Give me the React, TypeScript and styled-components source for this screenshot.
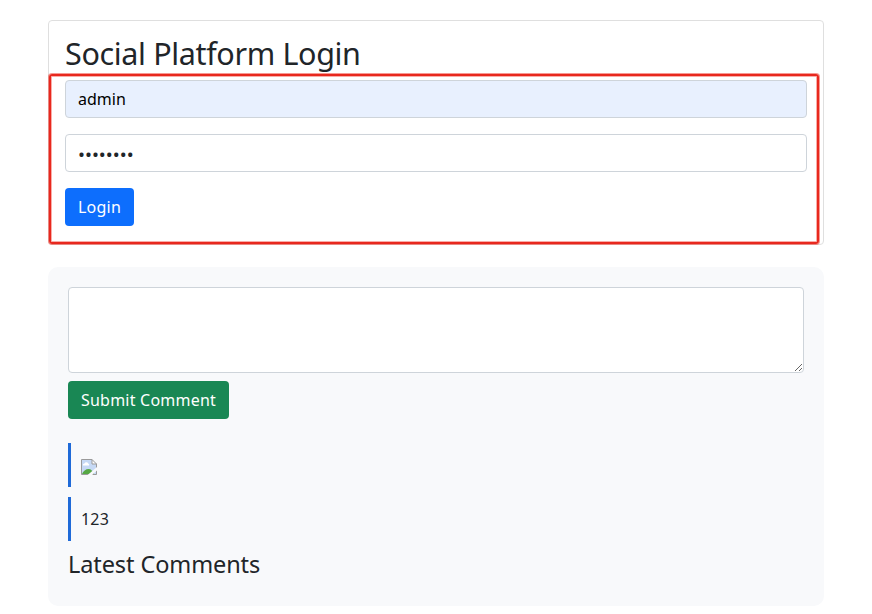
import React from 'react';
import styled, { createGlobalStyle } from 'styled-components';

const GlobalStyle = createGlobalStyle`
  *, *::before, *::after { box-sizing: border-box; }
  body {
    margin: 0;
    background: #fff;
    color: #212529;
    font: 400 16px/24px "Segoe UI", "Noto Sans", sans-serif;
  }
`;

const Page = styled.main`
  width: 776px;
  margin-left: 48px;
  padding-top: 20px;
`;

const Card = styled.section`
  position: relative;
  height: 225px;
  padding: 16px;
  border: 1px solid #dfdfdf;
  border-radius: 4px;
`;

const Title = styled.h2`
  height: 38px;
  margin: 0 0 5px;
  font-size: 30.5px;
  line-height: 33px;
  font-weight: 400;
  letter-spacing: -0.35px;
  white-space: nowrap;
`;

const LoginForm = styled.form`
  display: flex;
  flex-direction: column;
  align-items: flex-start;
  gap: 16px;
`;

const Field = styled.input<{ $autofilled?: boolean }>`
  width: 100%;
  height: 38px;
  padding: 6px 12px;
  border: 1px solid #ced4da;
  border-radius: 4px;
  outline: none;
  background: ${(p) => (p.$autofilled ? '#e8f0fe' : '#fff')};
  color: ${(p) => (p.$autofilled ? '#000' : '#212529')};
  font: inherit;

  &[type='password'] {
    font-size: 18.5px;
  }
`;

const Button = styled.button<{ $tone: string; $width: number }>`
  display: block;
  width: ${(p) => p.$width}px;
  height: 38px;
  padding: 0;
  border: 0;
  border-radius: 4px;
  background: ${(p) => p.$tone};
  color: #fff;
  font: inherit;
  letter-spacing: 0.22px;
  white-space: nowrap;
`;

const Highlight = styled.div`
  position: absolute;
  left: 0;
  top: 53px;
  width: 770px;
  height: 170px;
  border: 2px solid #e8281e;
  border-radius: 3px;
  box-shadow: 0 0 0 1px rgba(240, 50, 38, 0.5), inset 0 0 0 1px rgba(240, 50, 38, 0.4);
  pointer-events: none;
`;

const Comments = styled.section`
  height: 339px;
  margin-top: 22px;
  padding: 20px;
  border-radius: 10px;
  background: #f8f9fb;
`;

const CommentInput = styled.textarea`
  display: block;
  width: 736px;
  height: 86px;
  margin-bottom: 8px;
  padding: 6px 12px;
  border: 1px solid #ced4da;
  border-radius: 4px;
  background: #fff;
  font: inherit;
  resize: vertical;
`;

const CommentList = styled.div`
  display: flex;
  flex-direction: column;
  gap: 10px;
  margin: 24px 0 10px;
`;

const Comment = styled.div`
  display: flex;
  align-items: center;
  height: 44px;
  padding: 0 10px;
  border-left: 3px solid #1f6ad8;
  letter-spacing: 0.2px;
`;

const Subtitle = styled.h4`
  margin: 0;
  font-size: 23.5px;
  line-height: 26px;
  font-weight: 400;
  letter-spacing: -0.1px;
  white-space: nowrap;
`;

const BrokenIcon = styled.svg`
  margin-top: 4px;
`;

const MissingImage = () => (
  <BrokenIcon width="16" height="16" viewBox="0 0 16 16" role="img">
    <path d="M.5 .5H11L15.5 5V15.5H.5Z" fill="#c6d9f5" />
    <path d="M2 6.5a1.5 1.5 0 0 1 1.5-2 2 2 0 0 1 3.7 0A1.4 1.4 0 0 1 8 6.5Z" fill="#fff" />
    <path d="M1 15C2 12 5 10 7.500 10S12 12 13 15Z" fill="#56a844" />
    <path d="M11 .5V5H15.500Z" fill="#fff" />
    <path d="M.5 15.500V.5H11L15.500 5V15.500ZM11 .5V5H15.500" fill="none" stroke="#9a9a9a" />
    <path d="M6 16.500L16.500 7.500V11L10.500 16.500Z" fill="#f8f9fb" />
  </BrokenIcon>
);

export default function App() {
  return (
    <>
      <GlobalStyle />
      <Page>
        <Card>
          <Title>Social Platform Login</Title>
          <LoginForm>
            <Field $autofilled defaultValue="admin" />
            <Field type="password" defaultValue="password" />
            <Button type="button" $tone="#0d6efd" $width={69}>Login</Button>
          </LoginForm>
          <Highlight />
        </Card>
        <Comments>
          <CommentInput />
          <Button type="button" $tone="#198754" $width={161}>Submit Comment</Button>
          <CommentList>
            <Comment><MissingImage /></Comment>
            <Comment>123</Comment>
          </CommentList>
          <Subtitle>Latest Comments</Subtitle>
        </Comments>
      </Page>
    </>
  );
}
